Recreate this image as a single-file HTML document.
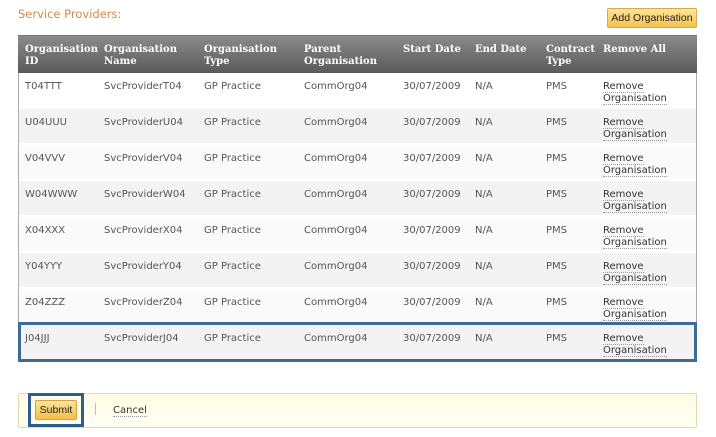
<!DOCTYPE html>
<html><head><meta charset="utf-8"><style>
body{margin:0;width:716px;height:437px;background:#fff;font-family:"DejaVu Sans",Verdana,sans-serif;position:relative;overflow:hidden}
.t{position:absolute;left:18px;top:7px;font-size:11.5px;color:#d4894a}
.add{position:absolute;left:607px;top:8px;width:88px;height:18px;border:1px solid #d8a84a;border-radius:2px;background:linear-gradient(#fde59a,#f6c24e);font-family:"Liberation Sans",Arial,sans-serif;font-size:10.5px;line-height:18px;text-align:center;color:#222}
.tbl{position:absolute;left:18px;top:35px;width:677px;height:326px;border:1px solid #aaa;border-top:none;border-bottom:none}
.hd{position:absolute;left:18px;top:35px;width:679px;height:37px;background:linear-gradient(#8a8a8a,#5a5a5a);border-top:1px solid #777}
.c{position:absolute;font-size:10px;line-height:12px;color:#555;white-space:nowrap}
.h{color:#fff;font-weight:bold;font-family:"DejaVu Serif",Verdana,serif;font-size:10px}
.row{position:absolute;left:19px;width:677px;height:34px;background:#f3f3f3}
.rm{color:#333;border-bottom:1px dotted #999}
.hl{position:absolute;left:18px;top:322px;width:673px;height:34px;border:3px solid #3d6a98}
.ft{position:absolute;left:18px;top:393px;width:677px;height:33px;border:1px solid #e5d9b0;border-radius:2px;background:linear-gradient(#fffbe3,#fffef3)}
.sb{position:absolute;left:28px;top:393px;width:50px;height:28px;border:3px solid #2e5d8e}
.sbt{position:absolute;left:35px;top:400px;width:40px;height:18px;border:1px solid #d3a24a;border-radius:2px;background:linear-gradient(#fde59a,#f5bd45);font-family:"Liberation Sans",Arial,sans-serif;font-size:10.5px;line-height:18px;text-align:center;color:#222}
</style></head><body>
<div class="t">Service Providers:</div>
<div class="add">Add Organisation</div>
<div class="tbl"></div>
<div class="row" style="top:73px;background:#fff"></div>
<div class="row" style="top:109px"></div>
<div class="row" style="top:145px;background:#fafafa"></div>
<div class="row" style="top:181px"></div>
<div class="row" style="top:217px;background:#fafafa"></div>
<div class="row" style="top:253px"></div>
<div class="row" style="top:289px;background:#fafafa"></div>
<div class="row" style="top:325px"></div>
<div class="hd"></div>
<div class="c h" style="left:25px;top:44px">Organisation<br>ID</div>
<div class="c h" style="left:104px;top:44px">Organisation<br>Name</div>
<div class="c h" style="left:204px;top:44px">Organisation<br>Type</div>
<div class="c h" style="left:304px;top:44px">Parent<br>Organisation</div>
<div class="c h" style="left:403px;top:44px">Start Date</div>
<div class="c h" style="left:475px;top:44px">End Date</div>
<div class="c h" style="left:546px;top:44px">Contract<br>Type</div>
<div class="c h" style="left:603px;top:44px">Remove All</div>

<div class="c" style="left:25px;top:81px">T04TTT</div><div class="c" style="left:104px;top:81px">SvcProviderT04</div><div class="c" style="left:204px;top:81px">GP Practice</div><div class="c" style="left:304px;top:81px">CommOrg04</div><div class="c" style="left:403px;top:81px">30/07/2009</div><div class="c" style="left:475px;top:81px">N/A</div><div class="c" style="left:546px;top:81px">PMS</div><div class="c" style="left:603px;top:81px"><span class="rm">Remove</span><br><span class="rm">Organisation</span></div>
<div class="c" style="left:25px;top:117px">U04UUU</div><div class="c" style="left:104px;top:117px">SvcProviderU04</div><div class="c" style="left:204px;top:117px">GP Practice</div><div class="c" style="left:304px;top:117px">CommOrg04</div><div class="c" style="left:403px;top:117px">30/07/2009</div><div class="c" style="left:475px;top:117px">N/A</div><div class="c" style="left:546px;top:117px">PMS</div><div class="c" style="left:603px;top:117px"><span class="rm">Remove</span><br><span class="rm">Organisation</span></div>
<div class="c" style="left:25px;top:153px">V04VVV</div><div class="c" style="left:104px;top:153px">SvcProviderV04</div><div class="c" style="left:204px;top:153px">GP Practice</div><div class="c" style="left:304px;top:153px">CommOrg04</div><div class="c" style="left:403px;top:153px">30/07/2009</div><div class="c" style="left:475px;top:153px">N/A</div><div class="c" style="left:546px;top:153px">PMS</div><div class="c" style="left:603px;top:153px"><span class="rm">Remove</span><br><span class="rm">Organisation</span></div>
<div class="c" style="left:25px;top:189px">W04WWW</div><div class="c" style="left:104px;top:189px">SvcProviderW04</div><div class="c" style="left:204px;top:189px">GP Practice</div><div class="c" style="left:304px;top:189px">CommOrg04</div><div class="c" style="left:403px;top:189px">30/07/2009</div><div class="c" style="left:475px;top:189px">N/A</div><div class="c" style="left:546px;top:189px">PMS</div><div class="c" style="left:603px;top:189px"><span class="rm">Remove</span><br><span class="rm">Organisation</span></div>
<div class="c" style="left:25px;top:225px">X04XXX</div><div class="c" style="left:104px;top:225px">SvcProviderX04</div><div class="c" style="left:204px;top:225px">GP Practice</div><div class="c" style="left:304px;top:225px">CommOrg04</div><div class="c" style="left:403px;top:225px">30/07/2009</div><div class="c" style="left:475px;top:225px">N/A</div><div class="c" style="left:546px;top:225px">PMS</div><div class="c" style="left:603px;top:225px"><span class="rm">Remove</span><br><span class="rm">Organisation</span></div>
<div class="c" style="left:25px;top:261px">Y04YYY</div><div class="c" style="left:104px;top:261px">SvcProviderY04</div><div class="c" style="left:204px;top:261px">GP Practice</div><div class="c" style="left:304px;top:261px">CommOrg04</div><div class="c" style="left:403px;top:261px">30/07/2009</div><div class="c" style="left:475px;top:261px">N/A</div><div class="c" style="left:546px;top:261px">PMS</div><div class="c" style="left:603px;top:261px"><span class="rm">Remove</span><br><span class="rm">Organisation</span></div>
<div class="c" style="left:25px;top:297px">Z04ZZZ</div><div class="c" style="left:104px;top:297px">SvcProviderZ04</div><div class="c" style="left:204px;top:297px">GP Practice</div><div class="c" style="left:304px;top:297px">CommOrg04</div><div class="c" style="left:403px;top:297px">30/07/2009</div><div class="c" style="left:475px;top:297px">N/A</div><div class="c" style="left:546px;top:297px">PMS</div><div class="c" style="left:603px;top:297px"><span class="rm">Remove</span><br><span class="rm">Organisation</span></div>
<div class="c" style="left:25px;top:333px">J04JJJ</div><div class="c" style="left:104px;top:333px">SvcProviderJ04</div><div class="c" style="left:204px;top:333px">GP Practice</div><div class="c" style="left:304px;top:333px">CommOrg04</div><div class="c" style="left:403px;top:333px">30/07/2009</div><div class="c" style="left:475px;top:333px">N/A</div><div class="c" style="left:546px;top:333px">PMS</div><div class="c" style="left:603px;top:333px"><span class="rm">Remove</span><br><span class="rm">Organisation</span></div>
<div class="hl"></div>

<div class="ft"></div>
<div class="sb"></div>
<div class="sbt">Submit</div>
<div style="position:absolute;left:95px;top:403px;width:1px;height:12px;background:#c8c0a0"></div>
<div class="c" style="left:113px;top:405px;color:#333"><span class="rm">Cancel</span></div>
</body></html>
